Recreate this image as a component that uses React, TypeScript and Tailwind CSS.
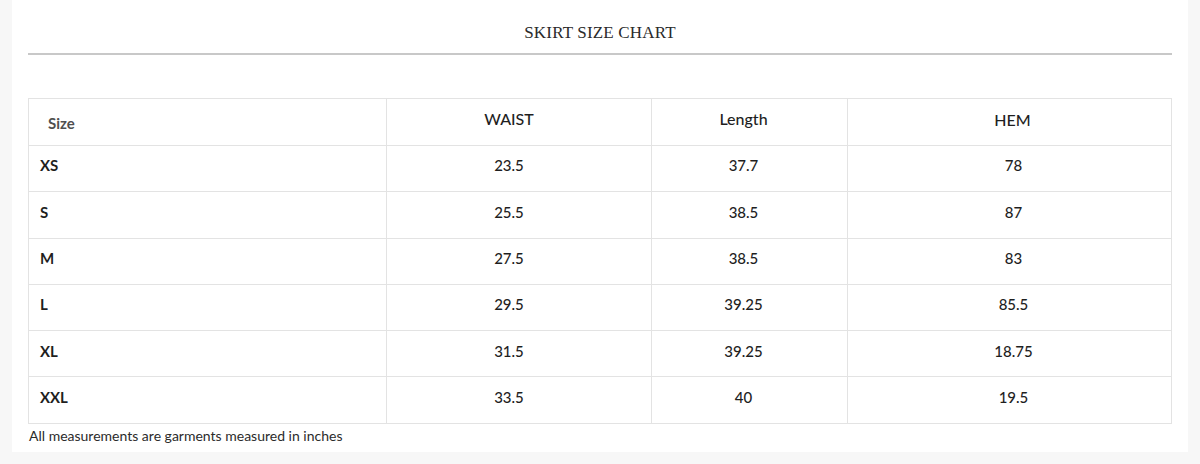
const rows = [
  { size: "XS", waist: "23.5", length: "37.7", hem: "78" },
  { size: "S", waist: "25.5", length: "38.5", hem: "87" },
  { size: "M", waist: "27.5", length: "38.5", hem: "83" },
  { size: "L", waist: "29.5", length: "39.25", hem: "85.5" },
  { size: "XL", waist: "31.5", length: "39.25", hem: "18.75" },
  { size: "XXL", waist: "33.5", length: "40", hem: "19.5" },
];

const sans = "font-['Lato','Noto_Sans',sans-serif]";
const cell = "border border-[#e3e3e3] pb-[6px] text-center text-[15px] font-medium";

export default function App() {
  return (
    <div className="h-[464px] w-full bg-[#f7f7f7] px-3 pb-3">
      <div className="h-full bg-white px-4">
        <h1 className="pt-[22px] text-center font-['Liberation_Serif',serif] text-[17px] leading-[22px] tracking-[0.01em] text-[#2a2a2a]">
          SKIRT SIZE CHART
        </h1>
        <div className="mt-[9px] h-[2px] bg-[#c8c8c8]" />

        <table className={`mt-[43px] w-full table-fixed border-collapse text-[#1f1f1f] ${sans}`}>
          <colgroup>
            <col className="w-[358px]" />
            <col className="w-[265px]" />
            <col className="w-[196px]" />
            <col />
          </colgroup>
          <thead>
            <tr className="h-[47px]">
              <th className="border border-[#e3e3e3] pl-[19px] pt-[3px] text-left text-[15px] font-bold text-[#4f4f4f]">
                Size
              </th>
              <th className="border border-[#e3e3e3] pb-[7px] pr-[20px] text-center text-[16px] font-medium">WAIST</th>
              <th className="border border-[#e3e3e3] pb-[6px] pr-[12px] text-center text-[16px] font-medium">Length</th>
              <th className="border border-[#e3e3e3] pb-[5px] pl-[6px] text-center text-[16px] font-medium">HEM</th>
            </tr>
          </thead>
          <tbody>
            {rows.map((r) => (
              <tr key={r.size} className="h-[46.3px]">
                <td className="border border-[#e3e3e3] pb-[6px] pl-[11px] text-[15px] font-bold">{r.size}</td>
                <td className={`${cell} pr-[20px]`}>{r.waist}</td>
                <td className={`${cell} pr-[12px]`}>{r.length}</td>
                <td className={`${cell} pl-[8px]`}>{r.hem}</td>
              </tr>
            ))}
          </tbody>
        </table>

        <p className={`mt-[4px] pl-[1px] text-[14px] leading-[15px] text-[#2b2b2b] ${sans}`}>
          All measurements are garments measured in inches
        </p>
      </div>
    </div>
  );
}
